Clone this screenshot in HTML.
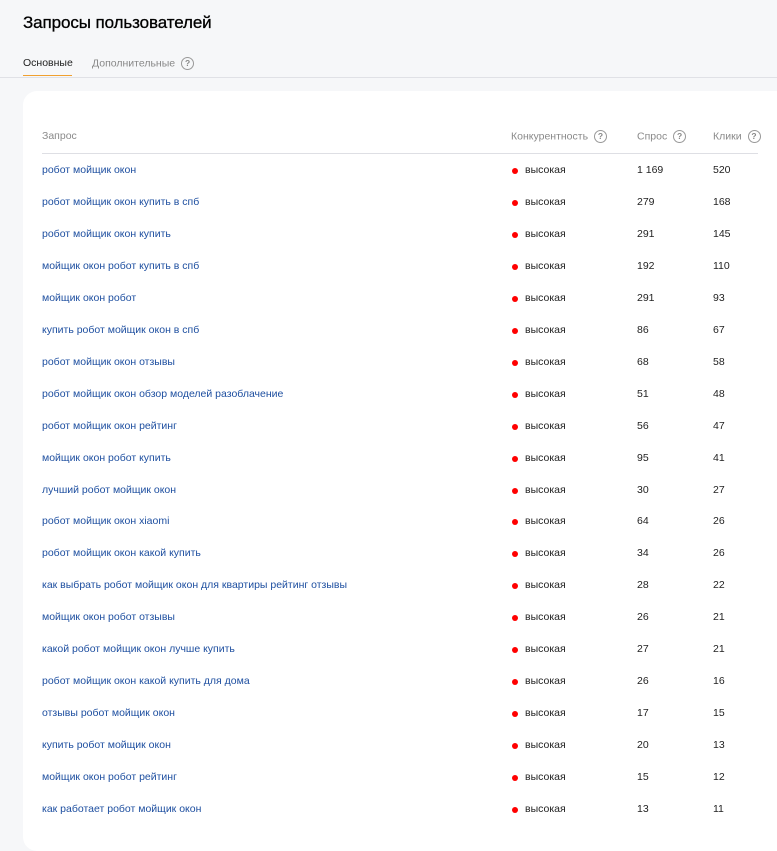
<!DOCTYPE html>
<html><head><meta charset="utf-8"><style>
body{margin:0;background:#f6f7f9;font-family:"Liberation Sans",sans-serif;width:777px;height:825px;overflow:hidden;position:relative}
h1{position:absolute;left:23px;top:13px;margin:0;font-size:17px;font-weight:normal;color:#000;letter-spacing:-0.1px;-webkit-text-stroke:0.3px #000}
.tabs{position:absolute;left:0;top:55px;width:777px;height:22px;border-bottom:1px solid #e0e1e6}
.t1{position:absolute;left:23px;top:2px;font-size:10.5px;color:#222;padding-bottom:6px;border-bottom:1px solid #f0a030;width:49px}
.t2{position:absolute;left:92px;top:2px;font-size:10.5px;color:#888}
.q{display:inline-block;width:13px;height:13px;border:1.5px solid #999;border-radius:50%;box-sizing:border-box;font-size:8.5px;line-height:10px;text-align:center;color:#888;vertical-align:middle;margin-left:3px;font-weight:bold}
.card{position:absolute;left:23px;top:91px;width:780px;height:760px;background:#fff;border-radius:14px}
.hd{position:absolute;top:130px;font-size:10.5px;color:#8a8a8a}
.line{position:absolute;left:42px;top:153px;width:716px;height:1px;background:#dedfe4}
.r{position:absolute;left:0;width:777px;height:14px;font-size:10.5px}
.r span{position:absolute;top:0}
.a{left:42px;color:#1e4fa0}
.r span.d{display:block;left:512px;top:4px;width:6px;height:6px;border-radius:50%;background:#f00}
.c{left:525px;color:#222}
.s{left:637px;color:#222}
.k{left:713px;color:#222}
</style></head><body>
<h1>Запросы пользователей</h1>
<div class="tabs"><div class="t1">Основные</div><div class="t2">Дополнительные <span class="q">?</span></div></div>
<div class="card"></div>
<div class="hd" style="left:42px">Запрос</div>
<div class="hd" style="left:511px">Конкурентность <span class="q">?</span></div>
<div class="hd" style="left:637px">Спрос <span class="q">?</span></div>
<div class="hd" style="left:713px">Клики <span class="q">?</span></div>
<div class="line"></div>
<div id="rows"></div>
<script>
var d=[["робот мойщик окон","1 169",520],["робот мойщик окон купить в спб",279,168],["робот мойщик окон купить",291,145],["мойщик окон робот купить в спб",192,110],["мойщик окон робот",291,93],["купить робот мойщик окон в спб",86,67],["робот мойщик окон отзывы",68,58],["робот мойщик окон обзор моделей разоблачение",51,48],["робот мойщик окон рейтинг",56,47],["мойщик окон робот купить",95,41],["лучший робот мойщик окон",30,27],["робот мойщик окон xiaomi",64,26],["робот мойщик окон какой купить",34,26],["как выбрать робот мойщик окон для квартиры рейтинг отзывы",28,22],["мойщик окон робот отзывы",26,21],["какой робот мойщик окон лучше купить",27,21],["робот мойщик окон какой купить для дома",26,16],["отзывы робот мойщик окон",17,15],["купить робот мойщик окон",20,13],["мойщик окон робот рейтинг",15,12],["как работает робот мойщик окон",13,11]];
var h="";d.forEach(function(r,i){h+='<div class="r" style="top:'+(164+i*31.95)+'px"><span class="a">'+r[0]+'</span><span class="d"></span><span class="c">высокая</span><span class="s">'+r[1]+'</span><span class="k">'+r[2]+'</span></div>'});
document.getElementById("rows").innerHTML=h;
</script>
</body></html>
